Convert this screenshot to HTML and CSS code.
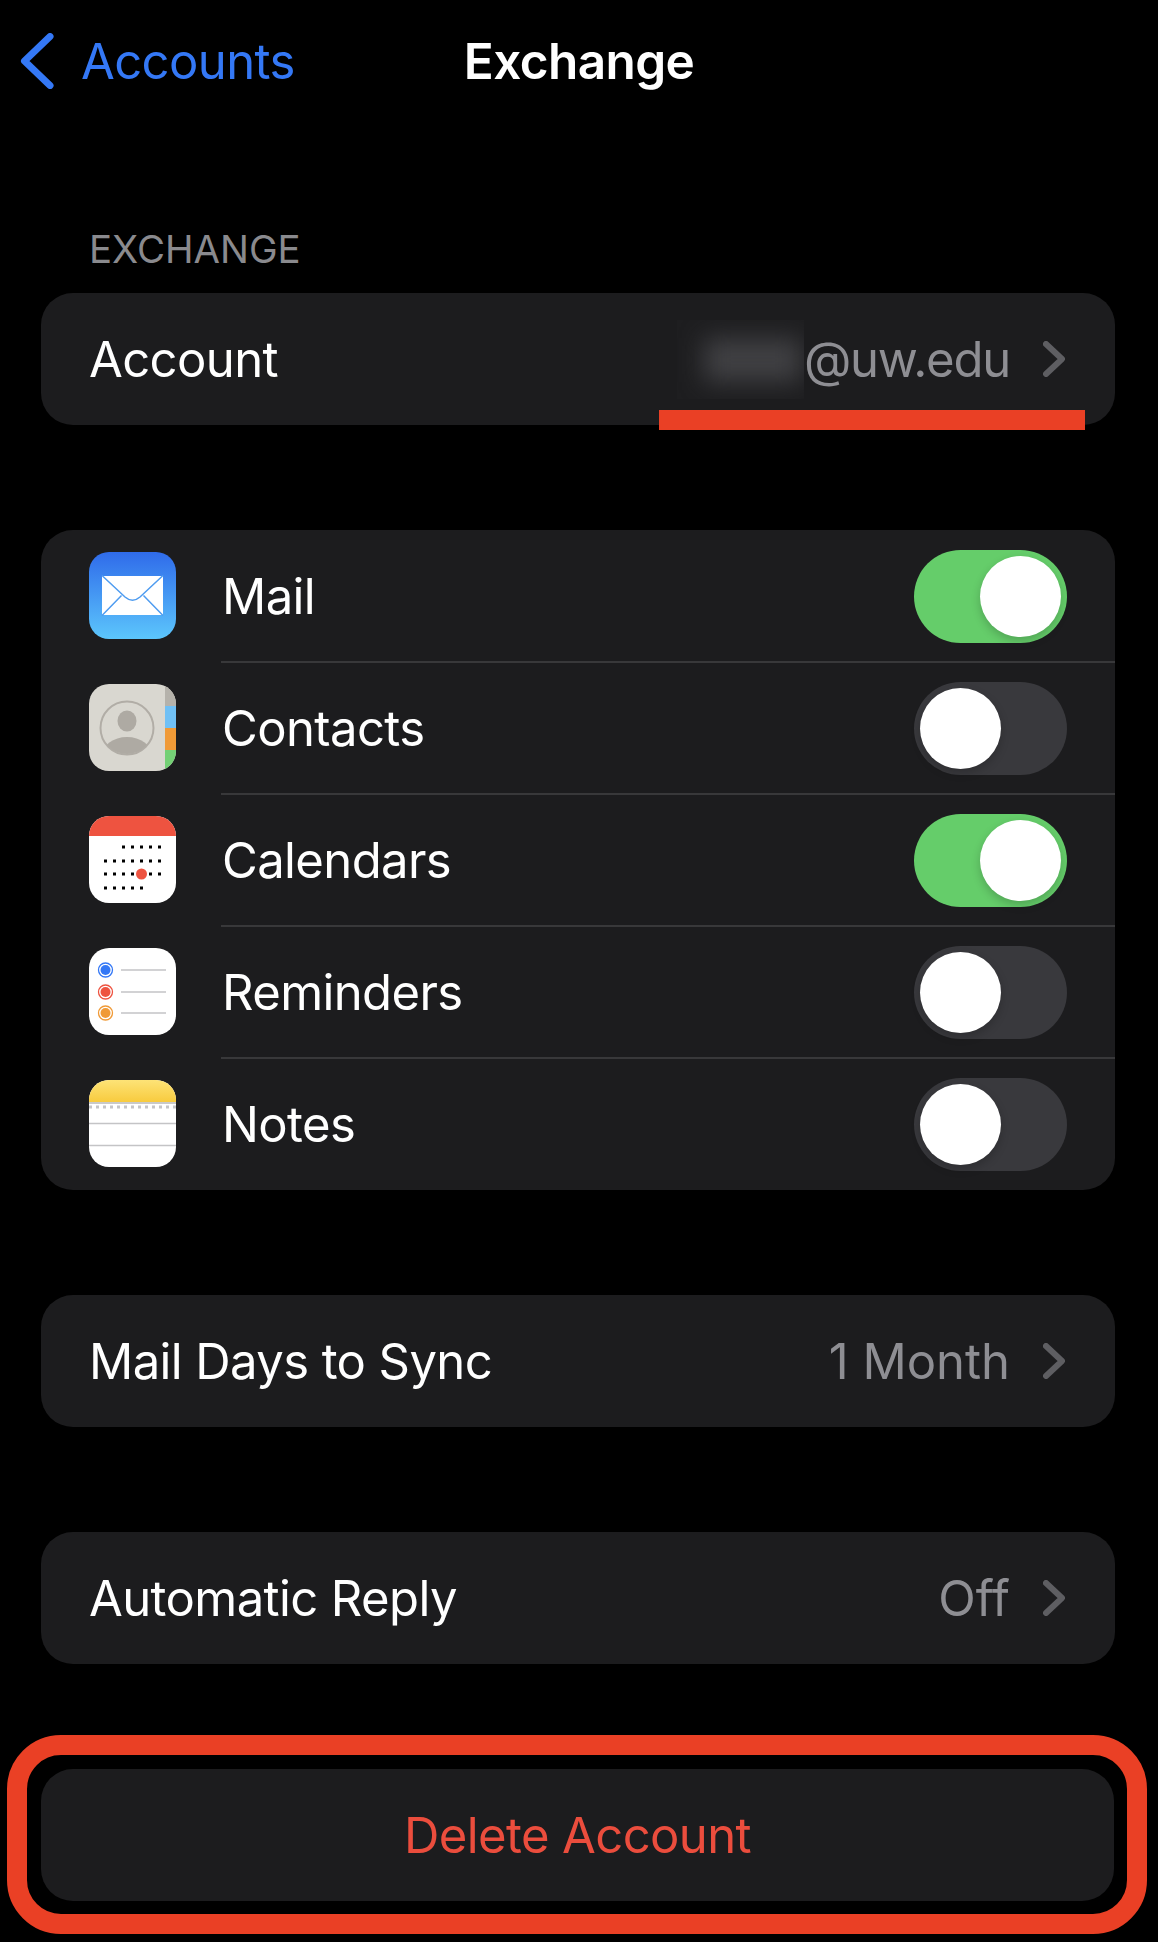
FILE: index.html
```html
<!DOCTYPE html>
<html lang="en">
<head>
    <meta charset="UTF-8">
    <meta name="viewport" content="width=device-width, initial-scale=1.0">
    <title>Exchange</title>
    <link rel="stylesheet" href="styles.css">
</head>
<body>
    <!-- Navigation bar -->
    <header class="nav">
        <a class="nav-back">
            <svg class="nav-chevron" viewBox="0 0 34 56"><path d="M30 3.500 L4.500 28 L30 52.500"/></svg>
            <span>Accounts</span>
        </a>
        <h1 class="nav-title">Exchange</h1>
    </header>

    <!-- Account -->
    <p class="section-label">EXCHANGE</p>
    <section class="card card-account">
        <div class="row">
            <span class="row-label">Account</span>
            <span class="row-value row-value-mail">
                <span class="redacted"><span class="redacted-smear"></span></span>@uw.edu
            </span>
            <svg class="chevron" viewBox="0 0 22 36"><path d="M3 3 L19 18 L3 33"/></svg>
        </div>
        <div class="underline-mark"></div>
    </section>

    <!-- Services -->
    <section class="card card-services">
        <div class="row row-service">
            <svg class="app-icon" viewBox="0 0 87 87">
                <defs>
                    <linearGradient id="mailBg" x1="0" y1="0" x2="0" y2="1">
                        <stop offset="0" stop-color="#2f6bea"/>
                        <stop offset="1" stop-color="#5cc6fc"/>
                    </linearGradient>
                </defs>
                <rect width="87" height="87" fill="url(#mailBg)"/>
                <rect x="13" y="24" width="61" height="39" fill="#fff"/>
                <path class="mail-lines" d="M13 23.500 L36 45 Q43.500 51.500 51 45 L74 23.500 M13 63.500 L32.500 43.500 M74 63.500 L54.500 43.500"/>
            </svg>
            <span class="row-label">Mail</span>
            <div class="toggle toggle-on"><span class="knob"></span></div>
        </div>
        <div class="row row-service">
            <svg class="app-icon" viewBox="0 0 87 87">
                <defs>
                    <clipPath id="faceClip"><circle cx="38" cy="44" r="26"/></clipPath>
                </defs>
                <rect width="87" height="87" fill="#d9d7d0"/>
                <rect x="76" width="11" height="22" fill="#b5b2ab"/>
                <rect x="76" y="22" width="11" height="22" fill="#70c0f5"/>
                <rect x="76" y="44" width="11" height="22" fill="#f09a37"/>
                <rect x="76" y="66" width="11" height="21" fill="#74d075"/>
                <circle cx="38" cy="44" r="26.500" fill="none" stroke="#b1ada6" stroke-width="2"/>
                <ellipse cx="38" cy="37" rx="9.500" ry="10.500" fill="#aeaaa3"/>
                <ellipse cx="38" cy="72" rx="25" ry="19" fill="#aeaaa3" clip-path="url(#faceClip)"/>
            </svg>
            <span class="row-label">Contacts</span>
            <div class="toggle"><span class="knob"></span></div>
        </div>
        <div class="row row-service">
            <svg class="app-icon" viewBox="0 0 87 87">
                <rect width="87" height="87" fill="#fff"/>
                <rect width="87" height="20" fill="#ee5340"/>
                <g class="cal-dots">
                    <line x1="33" y1="31" x2="72" y2="31"/>
                    <line x1="15" y1="45" x2="72" y2="45"/>
                    <line x1="15" y1="58" x2="45" y2="58"/>
                    <line x1="60" y1="58" x2="72" y2="58"/>
                    <line x1="15" y1="72" x2="54" y2="72"/>
                </g>
                <circle cx="52.500" cy="58" r="5.500" fill="#ee5340"/>
            </svg>
            <span class="row-label">Calendars</span>
            <div class="toggle toggle-on"><span class="knob"></span></div>
        </div>
        <div class="row row-service">
            <svg class="app-icon" viewBox="0 0 87 87">
                <rect width="87" height="87" fill="#fff"/>
                <circle cx="16.500" cy="22" r="5" fill="#3478f6"/>
                <circle cx="16.500" cy="22" r="7" fill="none" stroke="#3478f6" stroke-width="1.300"/>
                <circle cx="16.500" cy="44" r="5" fill="#ee5340"/>
                <circle cx="16.500" cy="44" r="7" fill="none" stroke="#ee5340" stroke-width="1.300"/>
                <circle cx="16.500" cy="65" r="5" fill="#f09a37"/>
                <circle cx="16.500" cy="65" r="7" fill="none" stroke="#f09a37" stroke-width="1.300"/>
                <path class="rule-lines" d="M32 22 H77 M32 44 H77 M32 65 H77"/>
            </svg>
            <span class="row-label">Reminders</span>
            <div class="toggle"><span class="knob"></span></div>
        </div>
        <div class="row row-service">
            <svg class="app-icon" viewBox="0 0 87 87">
                <defs>
                    <linearGradient id="notesBg" x1="0" y1="0" x2="0" y2="1">
                        <stop offset="0" stop-color="#fde377"/>
                        <stop offset="1" stop-color="#f8cb3e"/>
                    </linearGradient>
                </defs>
                <rect width="87" height="87" fill="#fff"/>
                <rect width="87" height="22" fill="url(#notesBg)"/>
                <rect y="22" width="87" height="2" fill="#c9c9c9"/>
                <line class="notes-dots" x1="0" y1="27" x2="87" y2="27"/>
                <path class="rule-lines" d="M0 43.500 H87 M0 65.500 H87"/>
            </svg>
            <span class="row-label">Notes</span>
            <div class="toggle"><span class="knob"></span></div>
        </div>
    </section>

    <section class="card card-sync">
        <div class="row">
            <span class="row-label">Mail Days to Sync</span>
            <span class="row-value">1 Month</span>
            <svg class="chevron" viewBox="0 0 22 36"><path d="M3 3 L19 18 L3 33"/></svg>
        </div>
    </section>

    <section class="card card-reply">
        <div class="row">
            <span class="row-label">Automatic Reply</span>
            <span class="row-value">Off</span>
            <svg class="chevron" viewBox="0 0 22 36"><path d="M3 3 L19 18 L3 33"/></svg>
        </div>
    </section>

    <!-- Red annotation around the delete button -->
    <div class="delete-mark">
        <section class="card card-delete">
            <span class="delete-label">Delete Account</span>
        </section>
    </div>
</body>
</html>
```

FILE: styles.css
```css
/* Global */
* {
    box-sizing: border-box;
}

body {
    margin: 0;
    width: 1158px;
    height: 1942px;
    overflow: hidden;
    background: #000;
    color: #fff;
    font-family: 'Inter', 'Liberation Sans', sans-serif;
    font-size: 49px;
    letter-spacing: -0.6px;
}

/* Navigation bar */
.nav {
    position: relative;
    height: 122px;
    display: flex;
    align-items: center;
    justify-content: center;
}

.nav-back {
    position: absolute;
    left: 20px;
    top: 32px;
    height: 58px;
    display: flex;
    align-items: center;
    gap: 27px;
    color: #3478f6;
}

.nav-chevron {
    width: 34px;
    height: 56px;
}

.nav-chevron path {
    fill: none;
    stroke: #3478f6;
    stroke-width: 7;
    stroke-linecap: round;
    stroke-linejoin: round;
}

.nav-title {
    margin: 0;
    font-size: 49.5px;
    font-weight: 600;
}

/* Section title */
.section-label {
    margin: 105px 0 0 89px;
    height: 66px;
    font-size: 38.4px;
    line-height: 45px;
    letter-spacing: 0;
    color: #8a8a8e;
}

/* Cards */
.card {
    position: relative;
    width: 1074px;
    margin-left: 41px;
    background: #1c1c1e;
    border-radius: 32px;
}

.card-services {
    margin-top: 105px;
}

.card-sync {
    margin-top: 105px;
}

.card-reply {
    margin-top: 105px;
}

.row {
    height: 132px;
    display: flex;
    align-items: center;
    padding: 0 50px 0 48px;
}

.row-label {
    flex: 1;
}

.row-value {
    display: flex;
    align-items: center;
    margin-right: 33px;
    letter-spacing: 0;
    color: #8e8e93;
}

.row-value-mail {
    letter-spacing: -1.2px;
}

.chevron {
    width: 22px;
    height: 36px;
}

.chevron path {
    fill: none;
    stroke: #5e5e62;
    stroke-width: 6;
    stroke-linecap: round;
    stroke-linejoin: round;
}

/* Blurred address */
.redacted {
    display: block;
    width: 127px;
    height: 79px;
    overflow: hidden;
    background: #1e1e20;
}

.redacted-smear {
    display: block;
    width: 96px;
    height: 44px;
    margin: 18px 0 0 28px;
    background: repeating-linear-gradient(90deg, #48484b 0, #48484b 9px, #38383b 9px, #38383b 18px);
    filter: blur(12px);
}

/* Annotation under the account */
.underline-mark {
    position: absolute;
    left: 618px;
    top: 117px;
    width: 426px;
    height: 20px;
    background: #ea4025;
}

/* Service rows */
.row-service {
    position: relative;
    padding: 0 48px;
    gap: 46px;
}

.row-service + .row-service::before {
    content: "";
    position: absolute;
    left: 180px;
    right: 0;
    top: -1px;
    height: 2px;
    background: #38383a;
}

.app-icon {
    flex: none;
    width: 87px;
    height: 87px;
    margin-bottom: 1px;
    border-radius: 20px;
}

.mail-lines {
    fill: none;
    stroke: #4f9cf0;
    stroke-width: 1.500;
}

.cal-dots line {
    stroke: #000;
    stroke-width: 3;
    stroke-dasharray: 3 6;
}

.rule-lines {
    fill: none;
    stroke: #c4c4c6;
    stroke-width: 1.500;
}

.notes-dots {
    stroke: #c4c4c6;
    stroke-width: 3;
    stroke-dasharray: 3 4;
}

/* Toggles */
.toggle {
    flex: none;
    display: flex;
    align-items: center;
    width: 153px;
    height: 93px;
    padding: 0 6px;
    border-radius: 47px;
    background: #39393d;
}

.toggle-on {
    justify-content: flex-end;
    background: #65cd6a;
}

.knob {
    width: 81px;
    height: 81px;
    border-radius: 50%;
    background: #fff;
    box-shadow: 0 4px 10px rgba(0, 0, 0, 0.2);
}

/* Delete button */
.delete-mark {
    width: 1140px;
    height: 199px;
    margin: 71px 0 0 7px;
    padding: 14px 13px 13px 14px;
    border: 20px solid #ea4025;
    border-radius: 54px;
}

.card-delete {
    width: 1073px;
    height: 132px;
    margin: 0;
    display: flex;
    align-items: center;
    justify-content: center;
}

.delete-label {
    color: #eb4d3d;
}
```
